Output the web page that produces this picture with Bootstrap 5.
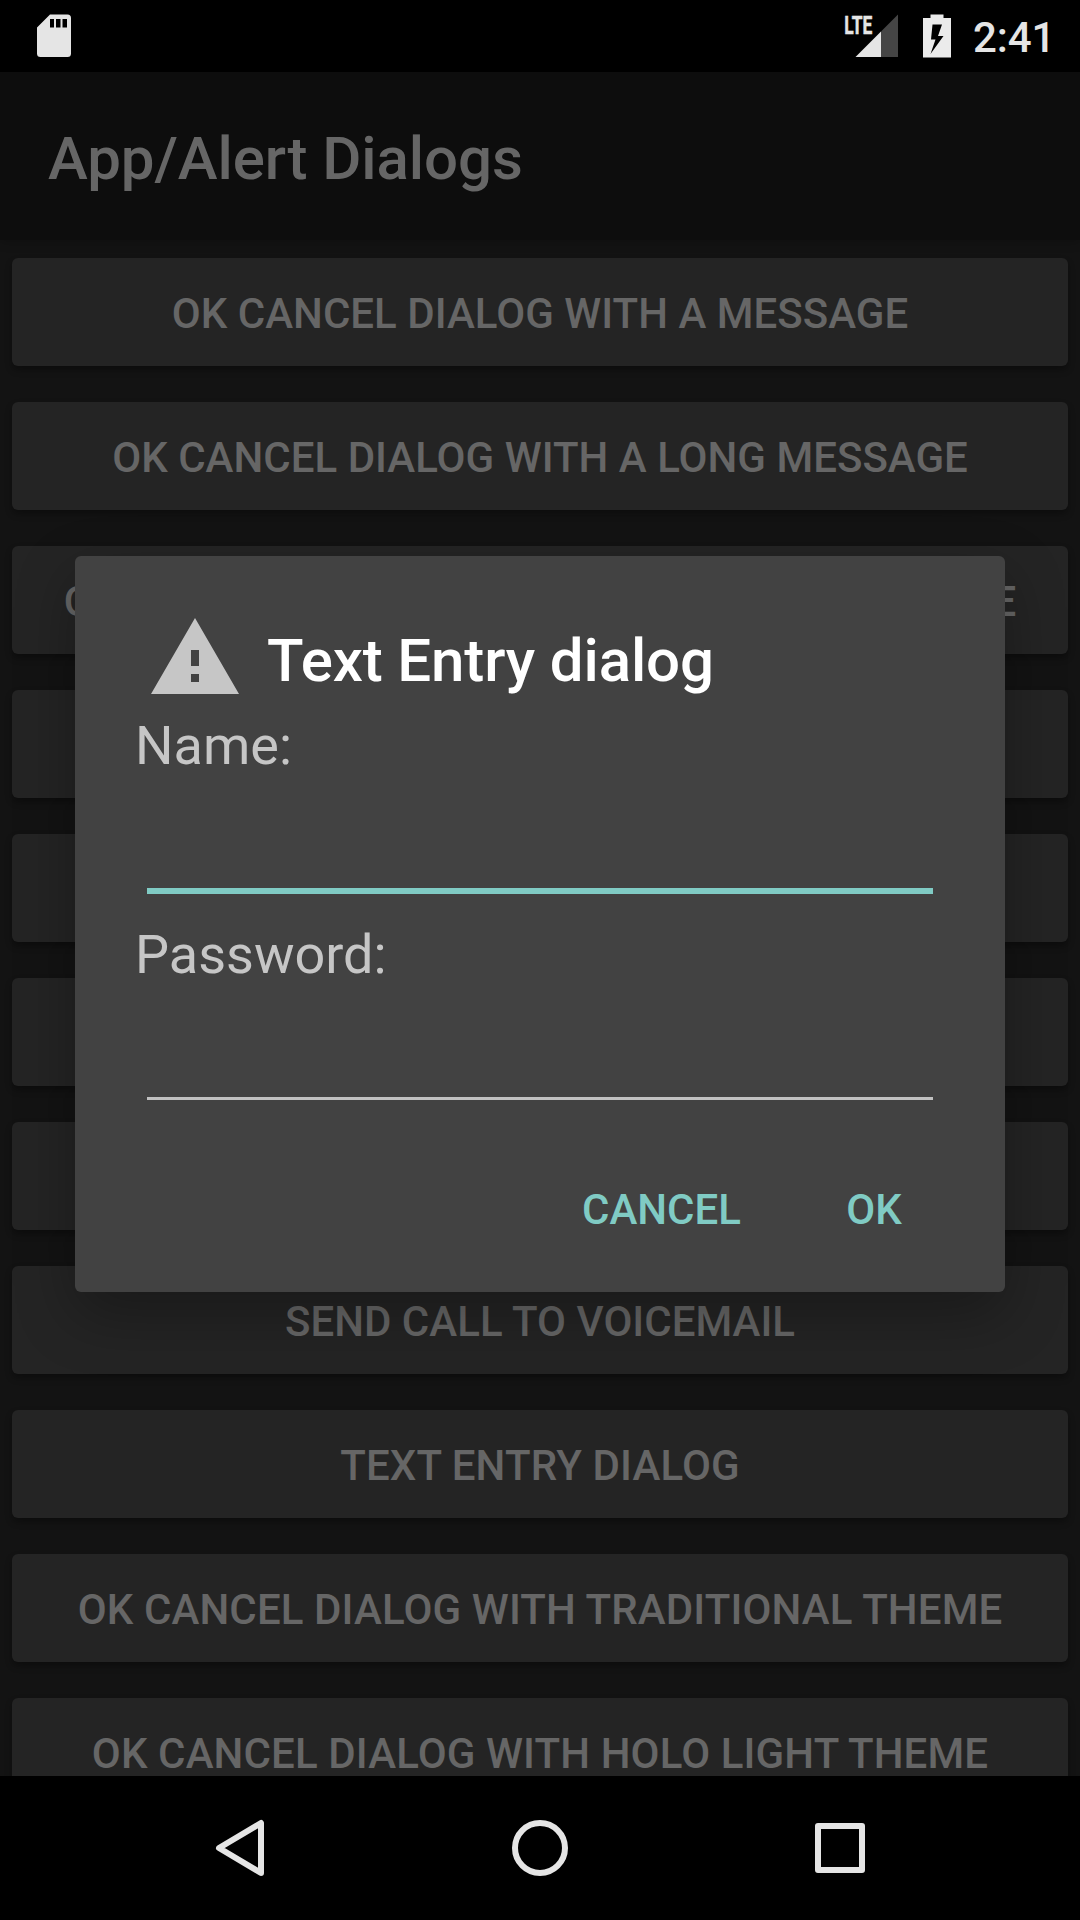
<!DOCTYPE html>
<html lang="en">
<head>
<meta charset="utf-8">
<meta name="viewport" content="width=device-width, initial-scale=1">
<title>App/Alert Dialogs</title>
<link href="https://cdn.jsdelivr.net/npm/bootstrap@5.3.0/dist/css/bootstrap.min.css" rel="stylesheet">
<style>
body{font-family:Roboto,"Liberation Sans",sans-serif;background:#000;width:1080px;height:1920px}
.screen{width:1080px;height:1920px}
.status{height:72px;color:#e5e5e5}
.clock{font-size:42px;font-weight:500;line-height:72px;padding-top:3px;width:107px;letter-spacing:-.1px}
.appbar{height:168px;background:#0d0d0d;color:#666;box-shadow:0 2px 10px rgba(0,0,0,.22);z-index:1}
.appbar h1{font-size:60px;font-weight:500;line-height:72px;padding-left:48px;padding-top:5px;letter-spacing:-.07px}
.content-pane{background:#131313;padding:18px 12px 0;gap:36px}
.dlg-trigger{height:108px;flex:none;border:0;border-radius:6px;background:#242424;color:#666;font-size:42px;font-weight:500;line-height:60px;padding:4px 0 0;box-shadow:0 4px 7px rgba(0,0,0,.32);letter-spacing:.02px}
.dlg-trigger.spaced{letter-spacing:.12px}
.alert-box{left:75px;top:556px;width:930px;height:736px;background:#424242;border-radius:6px;padding:54px 60px 28px;box-shadow:0 22px 60px rgba(0,0,0,.3);z-index:2}
.alert-title{height:96px;padding-left:12px;gap:24px}
.alert-title h2{font-size:60px;font-weight:500;line-height:72px;padding-top:5px;letter-spacing:-.13px}
.alert-box label{font-size:54px;line-height:72px;color:#c6c6c6}
.name-label{margin-top:4px}
.pass-label{margin-top:25px}
.line-input,.line-input:focus{background:transparent;border-radius:0;border:0 solid;margin:0 12px;width:786px;padding:0;box-shadow:none;color:#fff;font-size:54px}
.line-input.active-line{height:112px;border-bottom:6px solid #80cbc4}
.line-input.idle-line{height:109px;border-bottom:3px solid #c1c1c1}
.actions{margin-top:55px;width:835px}
.actions .btn{height:108px;border:0;color:#80cbc4;font-size:42px;font-weight:500;padding:0}
.btn-cancel{width:233px}.btn-ok{width:192px}
.navkeys{height:144px}
</style>
</head>
<body>
<div class="screen position-relative d-flex flex-column overflow-hidden">
  <header class="status flex-shrink-0 d-flex align-items-center bg-black">
    <svg width="110" height="72" fill="#e5e5e5"><path fill-rule="evenodd" d="M50 14.500H67.500a3.500 3.500 0 0 1 3.500 3.500V53.500a3.500 3.500 0 0 1-3.500 3.500H40.500a3.500 3.500 0 0 1-3.500-3.500V27.500ZM50 19v8.500h4V19ZM56 19v8.500h4.500V19ZM62.500 19v8.500h4.500V19Z"/></svg>
    <svg class="ms-auto" width="133" height="72" viewBox="840 0 133 72">
      <path fill="#454545" d="M881 31.500 898 14.500V57H881Z"/><path fill="#e5e5e5" d="M855.500 57 881 31.500V57Z"/>
      <text x="844.300" y="33.800" font-size="26.500" font-weight="700" fill="#e5e5e5" stroke="#e5e5e5" stroke-width=".5" textLength="28" lengthAdjust="spacingAndGlyphs">LTE</text>
      <path fill="#ebebeb" fill-rule="evenodd" d="M930.500 14.500h13V18h7.500v39.500h-28V18h7.500ZM932.500 24.500 931 39.500h4.500L930.500 54 943.500 36h-5.500L942 24.500Z"/>
    </svg>
    <span class="clock">2:41</span>
  </header>
  <div class="appbar flex-shrink-0 d-flex align-items-center position-relative"><h1 class="m-0">App/Alert Dialogs</h1></div>
  <main class="content-pane flex-fill d-flex flex-column overflow-hidden">
    <button class="btn dlg-trigger">OK CANCEL DIALOG WITH A MESSAGE</button>
    <button class="btn dlg-trigger">OK CANCEL DIALOG WITH A LONG MESSAGE</button>
    <button class="btn dlg-trigger">OK CANCEL DIALOG WITH ULTRA LONG MESSAGE</button>
    <button class="btn dlg-trigger"></button>
    <button class="btn dlg-trigger"></button>
    <button class="btn dlg-trigger"></button>
    <button class="btn dlg-trigger"></button>
    <button class="btn dlg-trigger">SEND CALL TO VOICEMAIL</button>
    <button class="btn dlg-trigger spaced">TEXT ENTRY DIALOG</button>
    <button class="btn dlg-trigger spaced">OK CANCEL DIALOG WITH TRADITIONAL THEME</button>
    <button class="btn dlg-trigger spaced">OK CANCEL DIALOG WITH HOLO LIGHT THEME</button>
  </main>
  <section class="alert-box position-absolute d-flex flex-column" role="dialog">
    <div class="alert-title d-flex align-items-center">
      <svg width="96" height="96" viewBox="0 0 24 24" fill="#c6c6c6"><path d="M1 21h22L12 2 1 21zm12-3h-2v-2h2v2zm0-4h-2v-4h2v4z"/></svg>
      <h2 class="m-0 text-white">Text Entry dialog</h2>
    </div>
    <label class="name-label" for="fname">Name:</label>
    <input id="fname" class="form-control line-input active-line" type="text">
    <label class="pass-label" for="fpass">Password:</label>
    <input id="fpass" class="form-control line-input idle-line" type="password">
    <div class="actions d-flex justify-content-end"><button class="btn btn-cancel">CANCEL</button><button class="btn btn-ok">OK</button></div>
  </section>
  <footer class="navkeys flex-shrink-0 bg-black">
    <svg width="1080" height="144" fill="none" stroke="#e5e5e5" stroke-width="6" stroke-linejoin="round"><path d="M219 72 261 47V97Z"/><circle cx="540" cy="72" r="25"/><rect x="818" y="50" width="44" height="44"/></svg>
  </footer>
</div>
<script src="https://cdn.jsdelivr.net/npm/bootstrap@5.3.0/dist/js/bootstrap.bundle.min.js"></script>
</body>
</html>
